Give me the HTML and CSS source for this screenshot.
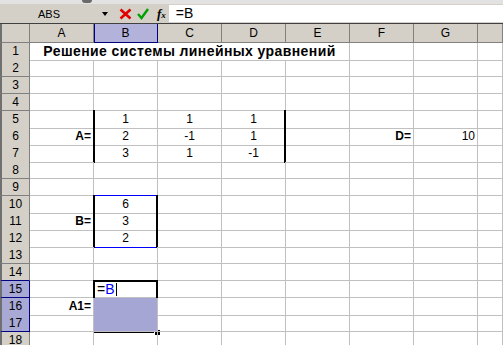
FILE: index.html
```html
<!DOCTYPE html>
<html lang="ru">
<head>
    <meta charset="UTF-8">
    <meta name="viewport" content="width=device-width, initial-scale=1.0">
    <title>Решение системы линейных уравнений</title>
    <link rel="stylesheet" href="styles.css">
</head>
<body>
    <div class="top-edge"><span class="grip"></span></div>
    <div class="formula-bar">
        <div class="name-box">ABS</div>
        <span class="drop"></span>
        <svg class="btn-cancel" width="13" height="12" viewBox="0 0 13 12">
            <path d="M1.5 1.5 L11.5 10.5 M11.5 1.5 L1.5 10.5" stroke="#e00000" stroke-width="2.6" fill="none"/>
        </svg>
        <svg class="btn-enter" width="12" height="12" viewBox="0 0 12 12">
            <path d="M1 6 L4.5 10 L11 1" stroke="#00a000" stroke-width="2.4" fill="none"/>
        </svg>
        <span class="fx">f<span>x</span></span>
        <div class="formula-input">=B</div>
    </div>

    <div class="sheet">
        <div class="row head"><div class="corner"></div><span class="ch">A</span><span class="ch sel">B</span><span class="ch">C</span><span class="ch">D</span><span class="ch">E</span><span class="ch">F</span><span class="ch">G</span><span class="ch"></span></div>
        <div class="row"><div class="rh">1</div><span class="title">Решение системы линейных уравнений</span><span></span><span></span><span></span></div>
        <div class="row"><div class="rh">2</div><span></span><span></span><span></span><span></span><span></span><span></span><span></span><span></span></div>
        <div class="row"><div class="rh">3</div><span></span><span></span><span></span><span></span><span></span><span></span><span></span><span></span></div>
        <div class="row"><div class="rh">4</div><span></span><span></span><span></span><span></span><span></span><span></span><span></span><span></span></div>
        <div class="row"><div class="rh">5</div><span></span><span class="num bl">1</span><span class="num">1</span><span class="num br">1</span><span></span><span></span><span></span><span></span></div>
        <div class="row"><div class="rh">6</div><span class="lbl">A=</span><span class="num bl">2</span><span class="num">-1</span><span class="num br">1</span><span></span><span class="lbl">D=</span><span class="val">10</span><span></span></div>
        <div class="row"><div class="rh">7</div><span></span><span class="num bl">3</span><span class="num">1</span><span class="num br">-1</span><span></span><span></span><span></span><span></span></div>
        <div class="row"><div class="rh">8</div><span></span><span></span><span></span><span></span><span></span><span></span><span></span><span></span></div>
        <div class="row"><div class="rh">9</div><span></span><span></span><span></span><span></span><span></span><span></span><span></span><span></span></div>
        <div class="row"><div class="rh">10</div><span></span><span class="num bl br bt">6</span><span></span><span></span><span></span><span></span><span></span><span></span></div>
        <div class="row"><div class="rh">11</div><span class="lbl">B=</span><span class="num bl br">3</span><span></span><span></span><span></span><span></span><span></span><span></span></div>
        <div class="row"><div class="rh">12</div><span></span><span class="num bl br bb">2</span><span></span><span></span><span></span><span></span><span></span><span></span></div>
        <div class="row"><div class="rh">13</div><span></span><span></span><span></span><span></span><span></span><span></span><span></span><span></span></div>
        <div class="row"><div class="rh pre-sel">14</div><span></span><span></span><span></span><span></span><span></span><span></span><span></span><span></span></div>
        <div class="row"><div class="rh sel">15</div><span></span><span class="edit">=<em>B</em><i class="caret"></i><i class="selection"><i class="handle"></i></i></span><span></span><span></span><span></span><span></span><span></span><span></span></div>
        <div class="row"><div class="rh sel">16</div><span class="lbl">A1=</span><span class="hl"></span><span></span><span></span><span></span><span></span><span></span><span></span></div>
        <div class="row"><div class="rh sel">17</div><span></span><span class="hl"></span><span></span><span></span><span></span><span></span><span></span><span></span></div>
        <div class="row"><div class="rh">18</div><span></span><span></span><span></span><span></span><span></span><span></span><span></span><span></span></div>
    </div>
</body>
</html>
```

FILE: styles.css
```css
body {
    margin: 0;
    width: 503px;
    height: 345px;
    overflow: hidden;
    background-color: #fff;
    font-family: "Liberation Sans", Arial, sans-serif;
}

/* toolbar remnant above the formula bar */
.top-edge {
    height: 4px;
    background-color: #e2e2e2;
}

.top-edge .grip {
    display: block;
    width: 10px;
    height: 3px;
    margin-left: 82px;
    background-color: #6a6a6a;
    border-radius: 0 0 4px 4px;
}

.formula-bar {
    display: flex;
    align-items: center;
    height: 19px;
    background-color: #d4d0c8;
}

.name-box {
    width: 98px;
    text-align: center;
    font-size: 11px;
}

.drop {
    width: 0;
    height: 0;
    margin-left: 4px;
    border-left: 3px solid transparent;
    border-right: 3px solid transparent;
    border-top: 4px solid #000;
}

.btn-cancel {
    margin-left: 11px;
}

.btn-enter {
    margin-left: 5px;
}

.fx {
    margin-left: 8px;
    font-family: "Liberation Serif", serif;
    font-style: italic;
    font-weight: bold;
    font-size: 13px;
}

.fx span {
    font-size: 9px;
}

.formula-input {
    flex: 1;
    align-self: stretch;
    margin: 1px 0 1px 3px;
    padding-left: 7px;
    background-color: #fff;
    font-size: 14px;
    line-height: 17px;
}

/* worksheet */
.sheet {
    border-top: 1px solid #404040;
}

.row {
    display: grid;
    grid-template-columns: 30px repeat(7, 64px) 25px;
    height: 17px;
}

.row.head {
    height: 19px;
}

.row > span {
    position: relative;
    box-sizing: border-box;
    padding: 0 2px;
    border-right: 1px solid #c0c0c0;
    border-bottom: 1px solid #c0c0c0;
    font-size: 12px;
    line-height: 17px;
    white-space: nowrap;
}

.corner,
.rh,
.row > .ch {
    box-sizing: border-box;
    background-color: #d4d0c8;
    border-right: 1px solid #808080;
    border-bottom: 1px solid #808080;
    text-align: center;
    font-size: 12px;
}

.corner,
.rh {
    border-left: 2px solid #707070;
}

.rh {
    line-height: 16px;
}

.row > .ch {
    line-height: 18px;
}

.row > .ch.sel {
    background-color: #b2b2da;
    border-right-color: #000080;
    border-bottom-color: #000080;
    box-shadow: inset 1px 0 0 #000080;
}

.rh.sel {
    background-color: #a9a9d6;
    border-bottom-color: #000080;
    border-right-color: #000080;
}

.rh.pre-sel {
    border-bottom-color: #000080;
}

.row > .title {
    grid-column: span 5;
    text-align: center;
    font-weight: bold;
    font-size: 14px;
    letter-spacing: 0.4px;
}

.num {
    text-align: center;
}

.lbl {
    text-align: right;
    font-weight: bold;
}

.val {
    text-align: right;
}

/* matrix brackets */
.bl::before,
.br::after {
    content: "";
    position: absolute;
    top: -1px;
    bottom: -1px;
    width: 2px;
    background-color: #000;
}

.bl::before {
    left: -1px;
}

.br::after {
    right: -1px;
}

.row > .bt {
    box-shadow: 0 -1px 0 #0000ff;
}

.row > .bb {
    border-bottom-color: #0000ff;
}

/* cell being edited and the selected range */
.row > .edit {
    padding-left: 3px;
    font-size: 14px;
    line-height: 16px;
}

.edit em {
    font-style: normal;
    color: #0000ff;
}

.caret {
    display: inline-block;
    width: 1px;
    height: 13px;
    margin-left: 1px;
    vertical-align: -2px;
    background-color: #000;
}

.selection {
    position: absolute;
    top: -1px;
    left: -1px;
    width: 65px;
    height: 53px;
    box-sizing: border-box;
    border: 2px solid #000;
}

.handle {
    position: absolute;
    right: -4px;
    bottom: -4px;
    width: 5px;
    height: 5px;
    background-color: #000;
    border: 1px solid #fff;
    border-width: 1px 0 0 1px;
}

.row > .hl {
    background-color: #a6a6d4;
}
```
